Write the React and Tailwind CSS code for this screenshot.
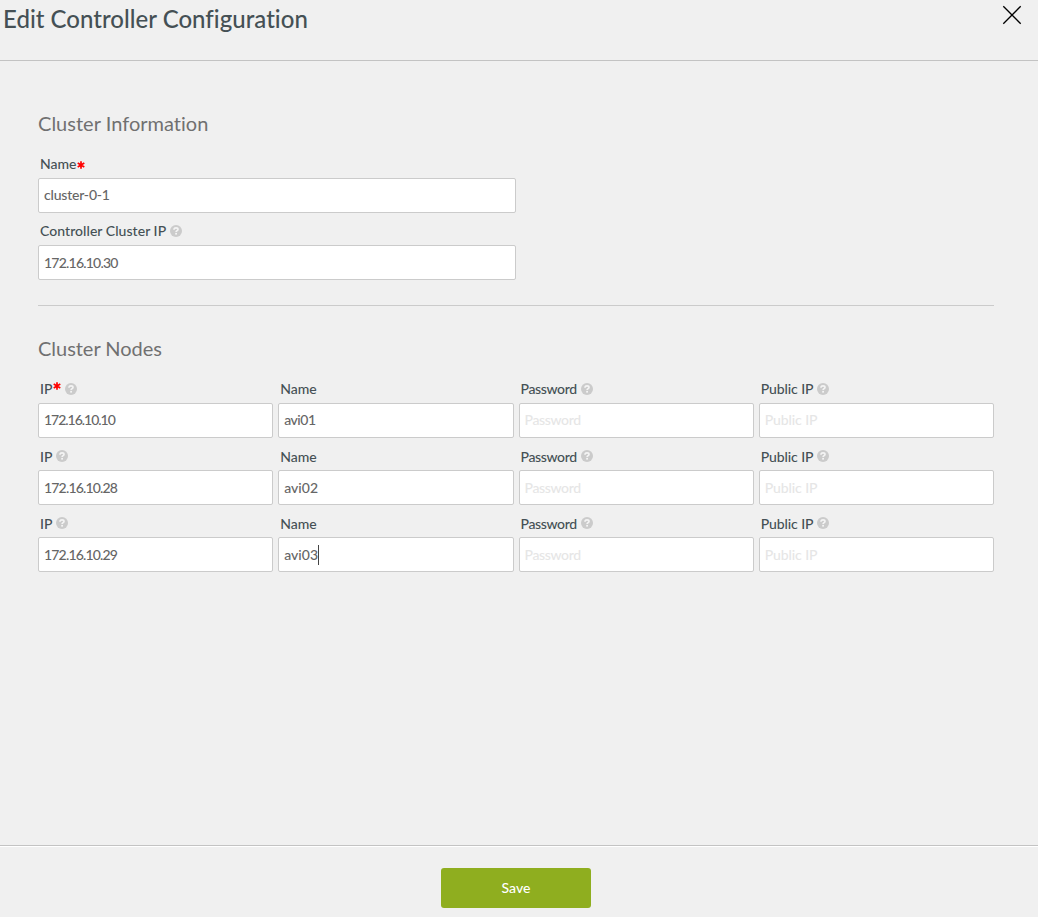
import React from "react";

function Help() {
  return (
    <svg viewBox="0 0 12 12" className="ml-1 h-3 w-3 shrink-0" aria-hidden="true">
      <circle cx="6" cy="6" r="6" fill="#cbcbcb" />
      <path d="M4 4.7C4 3.4 4.9 2.8 6.05 2.8S8 3.4 8 4.4C8 5.7 6.1 5.6 6.1 7.1" fill="none" stroke="#f4f4f4" strokeWidth="1.7" />
      <rect x="5.2" y="7.9" width="1.8" height="1.7" fill="#f4f4f4" />
    </svg>
  );
}

function Star({ raised }) {
  return (
    <svg
      viewBox="0 0 8 8"
      className={raised ? "-mt-1.5 ml-px h-2 w-2 shrink-0" : "mt-0.5 h-2 w-2 shrink-0"}
      aria-hidden="true"
    >
      <path d="M4 .2V7.8M.7 2.1L7.3 5.9M7.3 2.1L.7 5.9" stroke="#ff0000" strokeWidth="1.7" />
    </svg>
  );
}

function Field({ label, tracking = "", valueTracking = "", value, placeholder, help, required, raised, lift, liftValue, caret }) {
  return (
    <div className="flex min-w-0 flex-col">
      <label className="flex h-7 items-center pl-0.5 text-[14px] font-medium text-[#455055]">
        <span className={tracking + (lift ? " pb-0.5" : "")}>{label}</span>
        {required && <Star raised={raised} />}
        {help && <Help />}
      </label>
      <div className="flex h-[35px] items-center rounded-[2px] border border-[#cbcbcb] bg-white pl-[5px] text-[14px] font-medium">
        <span className={(value ? "text-[#666666] " + valueTracking : "text-[#e6e6e6] " + tracking) + (liftValue ? " pb-0.5" : "")}>
          {value || placeholder}
        </span>
        {caret && <span className="h-5 w-px bg-[#444444]" />}
      </div>
    </div>
  );
}

const nodes = [
  { ip: "172.16.10.10", name: "avi01", first: true },
  { ip: "172.16.10.28", name: "avi02" },
  { ip: "172.16.10.29", name: "avi03", caret: true },
];

export default function App() {
  return (
    <div className="flex h-[917px] w-[1038px] flex-col overflow-hidden bg-[#f0f0f0] font-['Lato',sans-serif]">
      <header className="flex h-[61px] shrink-0 items-start justify-between border-b border-[#c3c3c3] pr-4 pl-[3px]">
        <h1 className="pt-1 text-[24px] leading-[30px] font-medium tracking-[0.02px] text-[#455055]">Edit Controller Configuration</h1>
        <svg viewBox="0 0 20 20" className="mt-[5px] h-5 w-5" fill="none" stroke="#000000" strokeWidth="1.3">
          <path d="M1.3 1.3L18.7 18.7M18.7 1.3L1.3 18.7" />
        </svg>
      </header>

      <main className="flex-1 pr-11 pl-[38px]">
        <h2 className="pt-[47px] pb-0.5 text-[20px] leading-[30px] tracking-[0.02px] text-[#707070]">Cluster Information</h2>
        <div className="flex w-[478px] flex-col gap-1 pt-2.5">
          <Field label="Name" valueTracking="tracking-[-0.2px]" value="cluster-0-1" required lift liftValue />
          <Field label="Controller Cluster IP" tracking="tracking-[0.05px]" valueTracking="tracking-[-0.78px]" value="172.16.10.30" help lift />
        </div>
        <div className="mt-[25px] h-px bg-[#cbcbcb]" />
        <h2 className="pt-[27px] pb-0.5 text-[20px] leading-[30px] tracking-[-0.03px] text-[#707070]">Cluster Nodes</h2>
        <div className="flex flex-col gap-1 pt-2.5">
          {nodes.map((n) => (
            <div key={n.ip} className="grid grid-cols-4 gap-[5px]">
              <Field
                label="IP"
                valueTracking={n.first ? "tracking-[-1.02px]" : "tracking-[-0.82px]"}
                value={n.ip}
                required={n.first}
                raised
                help
                lift={n.first}
                liftValue={n.first}
              />
              <Field
                label="Name"
                valueTracking={n.first ? "tracking-[-0.5px]" : "tracking-normal"}
                value={n.name}
                caret={n.caret}
                lift={n.first}
                liftValue={n.first}
              />
              <Field label="Password" tracking="tracking-[-0.35px]" placeholder="Password" help lift={n.first} liftValue={n.first} />
              <Field label="Public IP" tracking="tracking-[-0.1px]" placeholder="Public IP" help lift={n.first} liftValue={n.first} />
            </div>
          ))}
        </div>
      </main>

      <footer className="h-[72px] shrink-0 border-t border-[#c3c3c3]">
        <div className="flex h-full justify-center border-t border-white pt-[21px] pr-[6px]">
          <button className="h-10 w-[150px] rounded-[3px] bg-[#8fae1f] pb-0.5 text-[14px] font-medium text-white">Save</button>
        </div>
      </footer>
    </div>
  );
}
